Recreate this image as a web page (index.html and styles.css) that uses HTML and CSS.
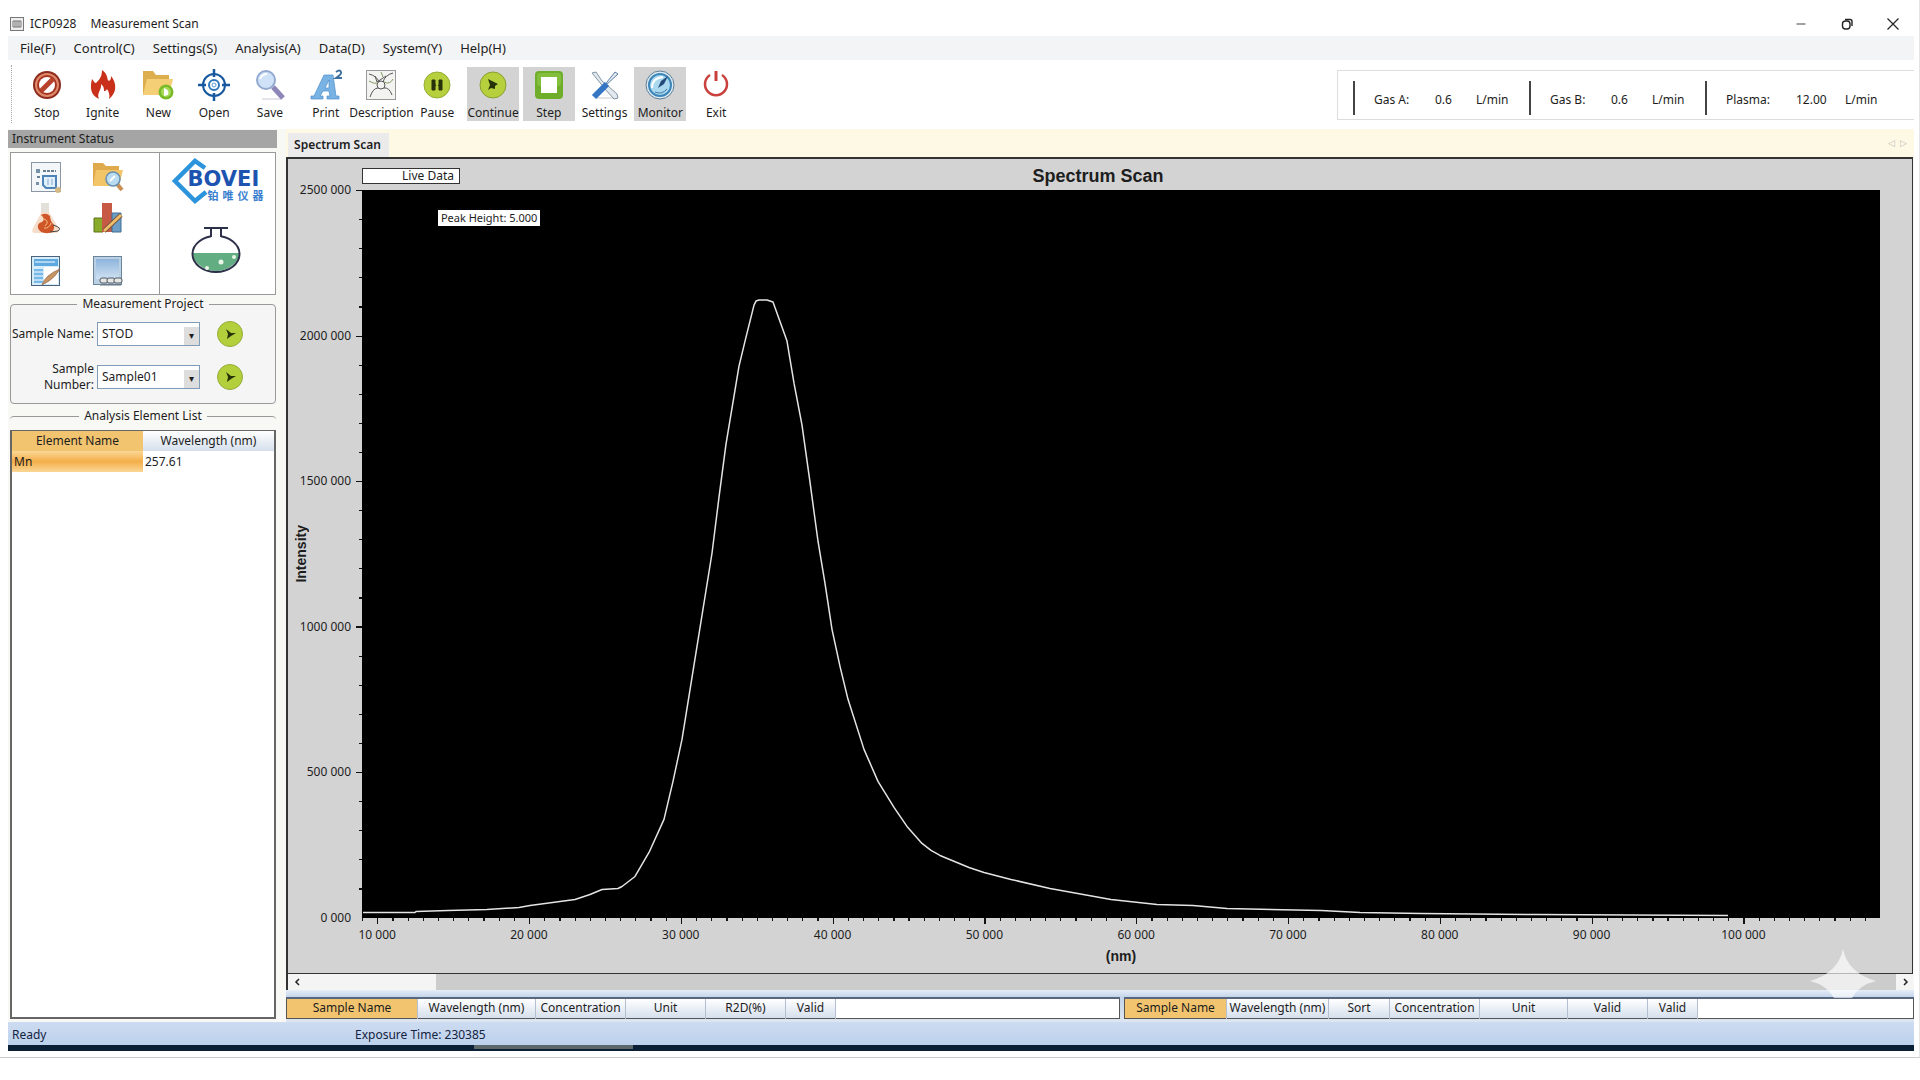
FILE: index.html
```html
<!DOCTYPE html>
<html lang="en">
<head>
<meta charset="utf-8">
<title>ICP0928 Measurement Scan</title>
<link rel="stylesheet" href="styles.css">
</head>
<body>
<div class="frame">
  <header class="titlebar">
    <svg class="app-icon" viewBox="0 0 14 14"><rect x=".5" y=".5" width="13" height="13" fill="#eee" stroke="#777"/><path d="M3 4h8v6H3zM5 4v6M7 4v6M9 4v6" fill="none" stroke="#777"/></svg>
    <h1 class="app-title"><span>ICP0928</span><span>Measurement Scan</span></h1>
    <div class="window-controls">
      <button aria-label="Minimize"><svg viewBox="0 0 12 12"><path d="M1.500 6h9" stroke="#444"/></svg></button>
      <button aria-label="Restore"><svg viewBox="0 0 12 12" fill="none" stroke="#222" stroke-width="1.400"><rect x="1.500" y="3" width="7.500" height="8" rx="3"/><path d="M4 1.500h5q2 0 2 2V8"/></svg></button>
      <button aria-label="Close"><svg viewBox="0 0 12 12"><path d="M.5.5l11 11M11.500.5l-11 11" stroke="#222" stroke-width="1.200"/></svg></button>
    </div>
  </header>

  <nav class="menubar">
    <button>File(F)</button><button>Control(C)</button><button>Settings(S)</button><button>Analysis(A)</button><button>Data(D)</button><button>System(Y)</button><button>Help(H)</button>
  </nav>

  <div class="toolbar">
    <div class="tools">
      <button class="tool"><svg viewBox="0 0 30 30"><circle cx="15" cy="15" r="14" fill="#8d2c1d"/><circle cx="15" cy="15" r="12" fill="#e08a6c"/><circle cx="15" cy="15" r="10" fill="#a63420"/><circle cx="15" cy="15" r="8" fill="#fff"/><path d="M9 21L21 9" stroke="#b8432c" stroke-width="5"/></svg><span>Stop</span></button>
      <button class="tool"><svg viewBox="0 0 30 30"><path d="M14 0c7 5 4 9 7 11 2-1 2-3 2-5 6 7 6 17-2 23 1-4 0-7-2-10-1 2-2 2-3 2 0-4-1-5-3-7 1 6-5 9-2 15C2 25 2 17 4 9c2 2 2 4 4 4 4-4 6-7 6-13z" fill="#c9301a"/></svg><span>Ignite</span></button>
      <button class="tool"><svg viewBox="0 0 30 30"><path d="M0 25V1h10l3 4h13v20z" fill="#dcae4e"/><path d="M0 25L4 9h26l-4 16z" fill="#f5cf76"/><circle cx="23" cy="22" r="7.500" fill="#7ab928"/><circle cx="23" cy="22" r="5" fill="#a5d956"/><path d="M21 18q6 2 4 7l-4 1z" fill="#fff"/></svg><span>New</span></button>
      <button class="tool"><svg viewBox="0 0 30 30" fill="none" stroke="#17589f"><circle cx="15" cy="15" r="11" stroke-width="2"/><circle cx="15" cy="15" r="5" stroke-width="2" stroke="#2e77ba"/><circle cx="15" cy="15" r="2" stroke="#5a9bd4"/><path d="M15-1v8M15 23v8M-1 15h8M23 15h8" stroke-width="2.500"/></svg><span>Open</span></button>
      <button class="tool"><svg viewBox="0 0 30 30"><path d="M7 29h19" stroke="#c9c9d8"/><path d="M18 17l10 11" stroke="#8d86b8" stroke-width="5"/><circle cx="11" cy="10" r="9" fill="#cfe2f8" stroke="#93a9d0" stroke-width="2"/><path d="M5 9q2-5 7-5" stroke="#fff" stroke-width="2" fill="none"/></svg><span>Save</span></button>
      <button class="tool"><svg viewBox="0 0 30 30"><path d="M13 5h9l3 21h3v3H16v-3h3l-1-5h-6l-3 5h3v3H0v-3h3zM18 10l-4 8h4z" fill="#79b3e4" stroke="#4c8cc8" stroke-width=".7"/><path d="M25 2q4-3 5 0 1 2-5 6h6" fill="none" stroke="#3f6f9f" stroke-width="2"/></svg><span>Print</span></button>
      <button class="tool"><svg viewBox="0 0 30 30"><rect x=".5" y=".5" width="29" height="29" fill="#f3f3f1" stroke="#999"/><g fill="none" stroke="#555"><circle cx="15" cy="15" r="4"/><path d="M3 4q8 2 10 8M27 3q-8 2-10 9M4 27q3-9 8-9M26 25q-3-8-8-7M9 6l2 6 9-6"/><path d="M3 11q7 4 9 1M18 12q6 3 9-3M15 2l2 5" stroke="#829b62"/></g></svg><span>Description</span></button>
      <button class="tool"><svg viewBox="0 0 30 30"><circle cx="15" cy="15" r="13" fill="#b6cf3c" stroke="#93ad35"/><path d="M10 10h3v10h-3zM17 10h3v10h-3zM12 13l2 3M19 13l-3 3" fill="#263308" stroke="#263308"/></svg><span>Pause</span></button>
      <button class="tool is-active"><svg viewBox="0 0 30 30"><circle cx="15" cy="15" r="13" fill="#b6cf3c" stroke="#899f33"/><path d="M10 9l10 5-3 2v3l-4-1-3 2 2-5z" fill="#263308"/></svg><span>Continue</span></button>
      <button class="tool is-active"><svg viewBox="0 0 30 30"><rect x="1" y="1" width="28" height="28" rx="4" fill="#6fae2b"/><rect x="3" y="3" width="24" height="13" rx="3" fill="#83bf3d"/><rect x="7" y="7" width="16" height="16" fill="#fff"/></svg><span>Step</span></button>
      <button class="tool"><svg viewBox="0 0 30 30"><path d="M7 28h19" stroke="#ccc"/><path d="M2 3l4-1 6 9 5 4 10 9 1 4-4 1-9-10-4-5z" fill="#e3e9ee" stroke="#8295a5"/><path d="M28 4l-3-2-8 10-2 4z" fill="#e3e9ee" stroke="#587fa8"/><path d="M17 14L4 27" stroke="#3576c4" stroke-width="6"/></svg><span>Settings</span></button>
      <button class="tool is-active"><svg viewBox="0 0 30 30"><circle cx="15" cy="15" r="14" fill="#dceaf2" stroke="#5f7f96"/><circle cx="15" cy="15" r="11" fill="#a9d8ef" stroke="#3d86b9" stroke-width="2"/><path d="M7 18q0-10 11-11" fill="none" stroke="#fff" stroke-width="2"/><path d="M13 18l3-7 7-5-4 8z" fill="#234a78"/><path d="M10 22q7 3 12-3" stroke="#3f75a5" fill="none"/></svg><span>Monitor</span></button>
      <button class="tool"><svg viewBox="0 0 30 30" fill="none" stroke="#c9413d" stroke-width="2.500"><path d="M9 5a11 11 0 1 0 12 0"/><path d="M15 1v10" stroke-width="3"/></svg><span>Exit</span></button>
    </div>
    <dl class="flows">
      <div class="flow"><dt>Gas A:</dt><dd>0.6</dd><dd>L/min</dd></div>
      <div class="flow"><dt>Gas B:</dt><dd>0.6</dd><dd>L/min</dd></div>
      <div class="flow flow-wide"><dt>Plasma:</dt><dd>12.00</dd><dd>L/min</dd></div>
    </dl>
  </div>

  <main class="workspace">
    <aside class="sidebar">
      <h2 class="side-title">Instrument Status</h2>
      <section class="status-box">
        <div class="shortcuts">
          <button aria-label="Report"><svg viewBox="0 0 30 30"><rect x=".5" y=".5" width="29" height="29" fill="#f4f7f9" stroke="#8b98a3"/><path d="M5 7h4v4H5zM5 20h3v3H5z" fill="#7790a8"/><path d="M12 9h13M6 15h3" stroke="#6b8093" stroke-width="2" stroke-dasharray="3 1"/><path d="M12 14h13v12H15l-3-3z" fill="#e0effc" stroke="#4e83b8" stroke-width="2"/><path d="M17 17v6M21 17v6" stroke="#88abcd"/><circle cx="27" cy="28" r="3" fill="#d3b983"/></svg></button>
          <button aria-label="Find sample"><svg viewBox="0 0 30 30"><path d="M0 24V1h10l3 3h13v20z" fill="#dfaa4b"/><path d="M0 24L3 8h27l-4 16z" fill="#f3c569"/><path d="M24 22l5 6" stroke="#c98f54" stroke-width="4"/><circle cx="20" cy="17" r="7" fill="#b9dcf1" stroke="#6790b1" stroke-width="1.500"/><path d="M17 19l5-5" stroke="#fff" stroke-width="2"/></svg></button>
          <button aria-label="Reagents"><svg viewBox="0 0 30 30"><path d="M10 0h8v9l10 17q0 4-3 4H3q-3-1-1-5L10 10z" fill="#f5ddca"/><path d="M10 0h8v9h-8z" fill="#e3dfd9"/><path d="M10 12q5-3 9 1 0 5 4 9 1 7-5 8-9 1-11-5-1-5 4-6 4-3-1-7z" fill="#ce5628"/><path d="M13 16q6 2 1 7M20 20q-2 6-7 5" stroke="#fbbd80" fill="none"/><path d="M22 22q10 3 5 6l-8 1" fill="none" stroke="#444"/></svg></button>
          <button aria-label="Chart"><svg viewBox="0 0 30 30"><path d="M1 15h9v14H1z" fill="#8aaa29" stroke="#5e751a"/><path d="M9 0h10v29H9z" fill="#c65a45"/><path d="M19 10h9v19h-9z" fill="#6e9dc6" stroke="#406d93"/><path d="M11 28L28 12" stroke="#6d513b" stroke-width="4.500"/><path d="M11 28L28 12" stroke="#f1bd69" stroke-width="3"/></svg></button>
          <button aria-label="Edit sheet"><svg viewBox="0 0 30 30"><rect x=".5" y=".5" width="28" height="29" fill="#d6ecfa" stroke="#48637b"/><path d="M3 3h24v7H3z" fill="#5eaae0"/><path d="M3 13h9v14H3z" fill="#77b9e8"/><path d="M3 16h9M3 20h9M3 24h9M4 6h20" stroke="#fff"/><path d="M13 11h14v17H13z" fill="#fff"/><path d="M11 29q3-10 18-16-5 8-11 12z" fill="#c99463" stroke="#8d6343" stroke-width=".7"/></svg></button>
          <button aria-label="Keyboard"><svg viewBox="0 0 30 30"><defs><linearGradient id="sky" x2="0" y2="1"><stop stop-color="#8eb4dc"/><stop offset="1" stop-color="#cfe1f1"/></linearGradient></defs><rect x=".5" y=".5" width="28" height="28" fill="#bcd0e3" stroke="#69849c"/><rect x="3" y="3" width="23" height="20" fill="url(#sky)"/><g fill="#e6e6e4" stroke="#4c5863"><rect x="7" y="22" width="8" height="5" rx="2"/><rect x="14" y="22" width="8" height="5" rx="2"/><rect x="21" y="22" width="8" height="5" rx="2"/></g><path d="M7 29h21" stroke="#68747e"/></svg></button>
        </div>
        <div class="brand">
          <div class="logo">
            <svg viewBox="0 0 36 46"><path d="M33 10L23 3 3 23l20 20 11-9" fill="none" stroke="#2b94dc" stroke-width="4.500"/></svg>
            <div class="logo-text"><strong>BOVEI</strong><div class="logo-sub" lang="zh"><span>铂</span><span>唯</span><span>仪</span><span>器</span></div></div>
          </div>
          <svg class="flask" viewBox="0 0 50 48"><ellipse cx="25" cy="28" rx="23.500" ry="18" fill="#fff"/><path d="M2 27h46q0 8-9 14-6 4-14 4t-14-4Q2 35 2 27z" fill="#63ad83"/><ellipse cx="25" cy="28" rx="23.500" ry="18" fill="none" stroke="#2c3149" stroke-width="2"/><path d="M20 2h10v10H20z" fill="#fff"/><path d="M13 2h24M20 3v8M30 3v8" stroke="#2c3149" stroke-width="2"/><circle cx="30" cy="36" r="2.500" fill="#e9f5e6"/><circle cx="43" cy="31" r="2" fill="#e9f5e6"/><circle cx="16" cy="42" r="2" fill="#e9f5e6"/></svg>
        </div>
      </section>

      <fieldset class="group project">
        <legend>Measurement Project</legend>
        <label for="sname">Sample Name:</label>
        <span class="combo"><select id="sname"><option>STOD</option></select></span>
        <button class="go" aria-label="Apply name"><svg viewBox="0 0 26 26"><circle cx="13" cy="13" r="12.500" fill="#b3cf3b" stroke="#94ac38"/><path d="M9 8l5 4 5 0-5 3-4 3 1-5z" fill="#263308"/></svg></button>
        <label for="snum">Sample<br>Number:</label>
        <span class="combo"><select id="snum"><option>Sample01</option></select></span>
        <button class="go" aria-label="Apply number"><svg viewBox="0 0 26 26"><circle cx="13" cy="13" r="12.500" fill="#b3cf3b" stroke="#94ac38"/><path d="M9 8l5 4 5 0-5 3-4 3 1-5z" fill="#263308"/></svg></button>
      </fieldset>

      <fieldset class="group elements">
        <legend>Analysis Element List</legend>
        <div class="element-list">
          <table class="grid">
            <thead><tr><th class="key">Element Name</th><th>Wavelength (nm)</th></tr></thead>
            <tbody><tr><td class="key">Mn</td><td>257.61</td></tr></tbody>
          </table>
        </div>
      </fieldset>
    </aside>

    <section class="content">
      <div class="tabs"><button class="tab">Spectrum Scan</button><span class="tab-nav"><button aria-label="Previous tab">◁</button><button aria-label="Next tab">▷</button></span></div>

      <div class="chart">
        <div class="chart-head"><span class="legend-box">Live Data</span><h2>Spectrum Scan</h2></div>
        <div class="y-title"><span>Intensity</span></div>
        <div class="y-labels"><span>2500 000</span><span>2000 000</span><span>1500 000</span><span>1000 000</span><span>500 000</span><span>0 000</span></div>
        <svg class="y-ticks" viewBox="0 0 6 25" preserveAspectRatio="none" shape-rendering="crispEdges"><path d="M4.500 0V25" stroke="#111" stroke-width="3" stroke-dasharray=".04 .96"/><path d="M3 0V25" stroke="#111" stroke-width="6" stroke-dasharray=".05 4.950"/></svg>
        <div class="plot">
          <svg viewBox="0 0 1518 727" preserveAspectRatio="none"><polyline fill="none" stroke="#e4e4e4" stroke-width="1.500" vector-effect="non-scaling-stroke" stroke-linejoin="round" points="1,722 53,722 54,721 86,720 125,719 157,717 168,715 213,709 228,704 240,699 256,698 260,696 273,686 287,662 302,629 311,591 320,549 335,456 350,363 357,307 364,254 377,176 384,147 392,115 394,111 397,110 405,110 411,112 425,151 432,193 440,235 448,292 456,351 463,393 470,439 478,476 486,509 502,559 516,591 532,617 545,636 560,653 569,660 578,665 607,677 622,682 649,689 688,698 749,709 795,714 831,715 865,718 959,720 998,722 1059,723 1173,724 1366,725"/></svg>
          <span class="peak">Peak Height: 5.000</span>
        </div>
        <svg class="x-ticks" viewBox="0 0 100 6" preserveAspectRatio="none" shape-rendering="crispEdges"><path d="M0 1.500H100" stroke="#111" stroke-width="3" stroke-dasharray=".08 .92"/><path d="M1 3H100" stroke="#111" stroke-width="6" stroke-dasharray=".08 9.920"/></svg>
        <div class="x-labels"><span>10 000</span><span>20 000</span><span>30 000</span><span>40 000</span><span>50 000</span><span>60 000</span><span>70 000</span><span>80 000</span><span>90 000</span><span>100 000</span></div>
        <div class="x-title">(nm)</div>
      </div>

      <div class="scroller">
        <button aria-label="Scroll left"><svg viewBox="0 0 8 10"><path d="M6 2L3 5l3 3" fill="none" stroke="#222" stroke-width="1.500"/></svg></button>
        <span class="thumb"></span>
        <button aria-label="Scroll right"><svg viewBox="0 0 8 10"><path d="M3 2l3 3-3 3" fill="none" stroke="#222" stroke-width="1.500"/></svg></button>
        <svg class="spark" viewBox="0 0 66 49"><path d="M33 0q5 24 33 32-17 4-24 17H24Q17 36 0 32 28 24 33 0z" fill="#fff" fill-opacity=".65"/></svg>
      </div>

      <div class="results">
        <table class="grid result">
          <colgroup><col class="w-name"><col class="w-wave"><col class="w-conc"><col class="w-unit"><col class="w-unit"><col class="w-valid"><col></colgroup>
          <tr><th class="key">Sample Name</th><th>Wavelength (nm)</th><th>Concentration</th><th>Unit</th><th>R2D(%)</th><th>Valid</th><td></td></tr>
        </table>
        <table class="grid result">
          <colgroup><col class="w-tight"><col class="w-tight"><col class="w-sort"><col class="w-conc"><col class="w-wide"><col class="w-unit"><col class="w-valid"><col></colgroup>
          <tr><th class="key">Sample Name</th><th>Wavelength (nm)</th><th>Sort</th><th>Concentration</th><th>Unit</th><th>Valid</th><th>Valid</th><td></td></tr>
        </table>
      </div>
    </section>
  </main>

  <footer class="statusbar"><span>Ready</span><span>Exposure Time: 230385</span></footer>
  <div class="edge"><span></span></div>
</div>
</body>
</html>
```
FILE: styles.css
```css
* { box-sizing: border-box; }
body {
  margin: 0;
  background: #fff;
  color: #1d1d1d;
  font: 12px/16px "Noto Sans", "Open Sans", sans-serif;
}
button {
  border: 0;
  margin: 0;
  padding: 0;
  background: none;
  color: inherit;
  font: inherit;
}
svg { display: block; overflow: visible; }
h1, h2, dl, dd { margin: 0; font: inherit; }

.frame {
  display: flex;
  flex-direction: column;
  min-height: calc(100vh - 22px);
  padding: 0 5px 6px 8px;
  border-right: 1px solid #e4e4e4;
  border-bottom: 1px solid #ccc;
}

/* title and menu */
.titlebar { display: flex; align-items: center; gap: 6px; height: 36px; padding: 12px 15px 0 2px; }
.app-icon { width: 14px; height: 14px; }
.app-title { display: flex; gap: 14px; flex: 1; }
.window-controls { display: flex; gap: 34px; }
.window-controls svg { width: 12px; height: 12px; }
.menubar { display: flex; align-items: center; gap: 18px; height: 24px; padding-left: 12px; background: #f3f4f5; font-size: 13px; }

/* toolbar */
.toolbar { display: flex; justify-content: space-between; height: 69px; padding: 5px 0 0 3px; }
.tools {
  display: grid;
  grid-template-columns: repeat(13, minmax(0, 1fr));
  gap: 4px;
  width: 731px;
  height: 58px;
  padding: 2px 0 2px 9px;
  border-left: 1px dotted #aaa;
}
.tool { display: flex; flex-direction: column; align-items: center; gap: 5px; padding-top: 3px; white-space: nowrap; }
.tool svg { width: 30px; height: 30px; flex: none; }
.tool.is-active { background: #d3d3d3; }
.tool span { min-width: max-content; }
.flows { display: flex; width: 577px; height: 50px; margin-top: 5px; padding: 10px 0 5px 15px; border: 1px solid #ddd; border-right: 0; }
.flow { display: flex; align-items: center; flex: none; width: 176px; height: 34px; padding: 4px 0 0 19px; border-left: 2px solid #444; }
.flow dt { flex: none; width: 61px; }
.flow dd { flex: none; width: 41px; }
.flow-wide dt { width: 70px; }
.flow-wide dd { width: 49px; }

/* sidebar */
.workspace { display: flex; flex: 1; gap: 9px; background: #f8f8f5; }
.sidebar { display: flex; flex-direction: column; width: 269px; padding-top: 1px; }
.side-title { height: 18px; padding-left: 4px; background: #a5a5a5; line-height: 18px; }
.status-box { display: flex; height: 143px; margin: 4px 1px 0 2px; border: 1px solid #999; background: #fff; }
.shortcuts { display: grid; grid-template-columns: 30px 30px; grid-template-rows: 41px 53px 30px; column-gap: 32px; align-items: start; width: 149px; padding: 9px 0 0 20px; border-right: 1px solid #999; }
.shortcuts svg { width: 30px; height: 30px; }
.brand { flex: 1; display: flex; flex-direction: column; align-items: center; justify-content: space-between; padding: 5px 0 20px; }
.logo { display: flex; align-items: center; color: #1d54b0; }
.logo > svg { width: 36px; height: 46px; }
.logo-text { display: flex; flex-direction: column; gap: 1px; margin: 8px 0 0 -20px; }
.logo-text strong { font: bold 21px/18px "DejaVu Sans", sans-serif; }
.logo-sub { display: flex; gap: 4px; padding-left: 20px; font: bold 11px/12px "Noto Sans CJK SC", sans-serif; color: #3b7fcf; }
.flask { width: 50px; height: 48px; margin-right: 4px; }

.group { margin: 0 1px 0 2px; border: 1px solid #999; border-radius: 4px; padding: 0; min-width: 0; }
.group legend { margin: 0 auto; padding: 0 5px; line-height: 18px; }
.project { display: grid; grid-template-columns: 83px 103px 26px; gap: 14px 3px; align-items: center; height: 109px; padding: 8px 0 0; background: #f5f5f5; align-content: start; }
.project label { text-align: right; white-space: nowrap; }
.project .go { margin-left: 14px; }
.project .go svg { width: 26px; height: 26px; }
.combo { position: relative; display: flex; }
.combo select { appearance: none; width: 100%; height: 24px; padding: 0 4px; border: 1px solid #7f9db9; border-radius: 0; background: #fff; color: inherit; font: inherit; }
.combo::after { content: "▾"; position: absolute; top: 5px; right: 1px; bottom: 1px; width: 15px; background: #ddd; text-align: center; font-size: 10px; line-height: 16px; pointer-events: none; }
.elements { display: flex; flex: 1; margin-top: 3px; margin-bottom: 3px; border-width: 1px 0 0; }
.element-list { flex: 1; margin-top: 5px; border: 2px solid #666; border-top-width: 1px; background: #fff; }

/* data grids */
.grid { width: 100%; table-layout: fixed; border-collapse: collapse; }
.grid th { height: 20px; padding: 0; background: linear-gradient(#fff, #d5dfec); font-weight: 400; text-align: center; }
.grid th.key { background: #f2c46f; }
.grid td { height: 21px; padding: 0 2px; }
.grid td.key { background: linear-gradient(#fbd795, #f4ae4a, #fbd795); }

/* spectrum */
.content { flex: 1; min-width: 0; display: flex; flex-direction: column; }
.tabs { display: flex; justify-content: space-between; align-items: flex-end; height: 28px; padding: 0 7px 0 2px; background: #fef9e4; }
.tab { height: 24px; width: 101px; padding-right: 2px; background: #ebebeb; font-weight: 600; line-height: 22px; }
.tab-nav { display: flex; gap: 5px; padding-bottom: 6px; color: #bbb; font-size: 9px; }
.chart {
  flex: 1;
  display: grid;
  grid-template-columns: 26px 42px 6px 1fr;
  grid-template-rows: 31px 1fr 6px 22px 20px;
  padding: 0 32px 7px 0;
  border: 2px solid #333;
  border-width: 2px 1px 1px 2px;
  margin-right: 1px;
  background: #d3d3d3;
}
.chart-head { grid-column: 4; display: grid; grid-template-columns: 98px 1fr; align-items: center; padding-top: 3px; }
.chart-head h2 { font: bold 18px/20px "Liberation Sans", sans-serif; text-align: center; padding-right: 144px; }
.legend-box { height: 16px; padding-right: 5px; border: 1px solid #333; background: #fff; text-align: right; line-height: 14px; }
.y-title { grid-area: 2 / 1; display: flex; align-items: center; justify-content: center; }
.y-title span { writing-mode: vertical-rl; transform: rotate(180deg); font: bold 14px/16px "Liberation Sans", sans-serif; }
.y-labels { grid-area: 2 / 2; display: flex; flex-direction: column; justify-content: space-between; align-items: flex-end; padding-right: 5px; }
.y-labels span { height: 0; line-height: 0; white-space: nowrap; }
.y-ticks { grid-area: 2 / 3; width: 6px; height: 100%; }
.plot { grid-area: 2 / 4; position: relative; background: #000; }
.plot svg { position: absolute; inset: 0; width: 100%; height: 100%; }
.peak { position: absolute; left: 5%; top: 20px; padding: 0 3px; background: #fff; font-size: 11px; line-height: 16px; white-space: nowrap; }
.x-ticks { grid-area: 3 / 4; width: 100%; height: 6px; }
.x-labels { grid-area: 4 / 4; display: flex; justify-content: space-between; align-items: center; padding: 0 9% 0 1%; }
.x-labels span { display: flex; justify-content: center; width: 0; white-space: nowrap; }
.x-title { grid-area: 5 / 4; text-align: center; font: bold 14px/20px "Liberation Sans", sans-serif; }

.scroller { position: relative; display: flex; height: 16px; margin-right: 1px; background: #f4f4f4; border-left: 2px solid #333; }
.scroller button { width: 17px; display: grid; place-items: center; }
.scroller button svg { width: 8px; height: 10px; }
.thumb { flex: 1; margin-left: 131px; background: #ccc; }
.spark { position: absolute; right: 37px; bottom: -8px; width: 66px; height: 49px; }

.results { display: grid; grid-template-columns: 834px 1fr; gap: 4px; padding: 7px 0 3px; background: linear-gradient(#e6eef7, #c3d4ea 7px, #dde6f0); }
.result { border: 1px solid #555; border-top: 2px solid #56677f; background: #fff; }
.result th { height: 21px; border-right: 1px solid #b3bfce; }
.w-name { width: 131px; }
.w-wave { width: 118px; }
.w-conc { width: 90px; }
.w-wide { width: 88px; }
.w-unit { width: 80px; }
.w-valid { width: 50px; }
.w-tight { width: 102px; }
.w-sort { width: 61px; }

.statusbar { display: flex; align-items: center; height: 23px; padding: 2px 0 0 4px; background: linear-gradient(#cddcf1, #bcd1ec); color: #14233f; }
.statusbar span:first-child { width: 343px; }
.edge { height: 6px; padding-left: 466px; background: #0b2034; }
.edge span { display: block; width: 159px; height: 4px; background: #5d686b; }
```
